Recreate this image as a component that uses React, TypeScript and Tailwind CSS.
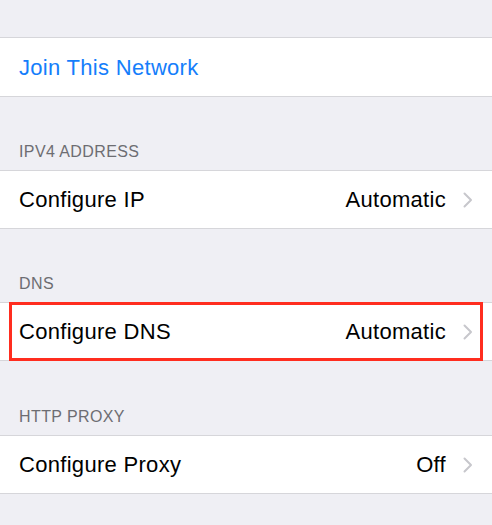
import React from "react";

const font = { fontFamily: '"Liberation Sans", Arial, sans-serif' };

function Chevron() {
  return (
    <svg width="10" height="16" viewBox="0 0 10 16" className="ml-[17px] mr-[19px]">
      <path d="M1.5 1.5 L8 8 L1.5 14.5" fill="none" stroke="#c7c7cc" strokeWidth="2" strokeLinecap="round" strokeLinejoin="round" />
    </svg>
  );
}

function Header({ text, tall }: { text: string; tall?: boolean }) {
  return (
    <div
      className={`${tall ? "h-[74px]" : "h-[73px]"} flex items-end pb-[9px] px-[19px] text-[16px] leading-[18px] tracking-[0.4px] text-[#6d6d72] uppercase`}
    >
      {text}
    </div>
  );
}

function Row({ label, value, highlight }: { label: string; value: string; highlight?: boolean }) {
  return (
    <div className="relative bg-white border-y border-[#d6d6da] h-[59px] flex items-center text-[22px] tracking-[0.3px]">
      <span className="pl-[19px] text-black flex-1">{label}</span>
      <span className="text-black">{value}</span>
      <Chevron />
      {highlight && (
        <div className="absolute left-[9px] right-[9px] top-[-1px] bottom-[-1px] border-[3px] border-[#ff2d1f]" />
      )}
    </div>
  );
}

export default function App() {
  return (
    <div className="w-[492px] h-[525px] bg-[#efeff4] overflow-hidden" style={font}>
      <div className="h-[37px]" />
      <div className="bg-white border-y border-[#d6d6da] h-[60px] flex items-center text-[22px] tracking-[0.3px]">
        <span className="pl-[19px] text-[#157efb]">Join This Network</span>
      </div>
      <Header text="IPv4 Address" />
      <Row label="Configure IP" value="Automatic" />
      <Header text="DNS" />
      <Row label="Configure DNS" value="Automatic" highlight />
      <Header text="HTTP Proxy" tall />
      <Row label="Configure Proxy" value="Off" />
    </div>
  );
}
